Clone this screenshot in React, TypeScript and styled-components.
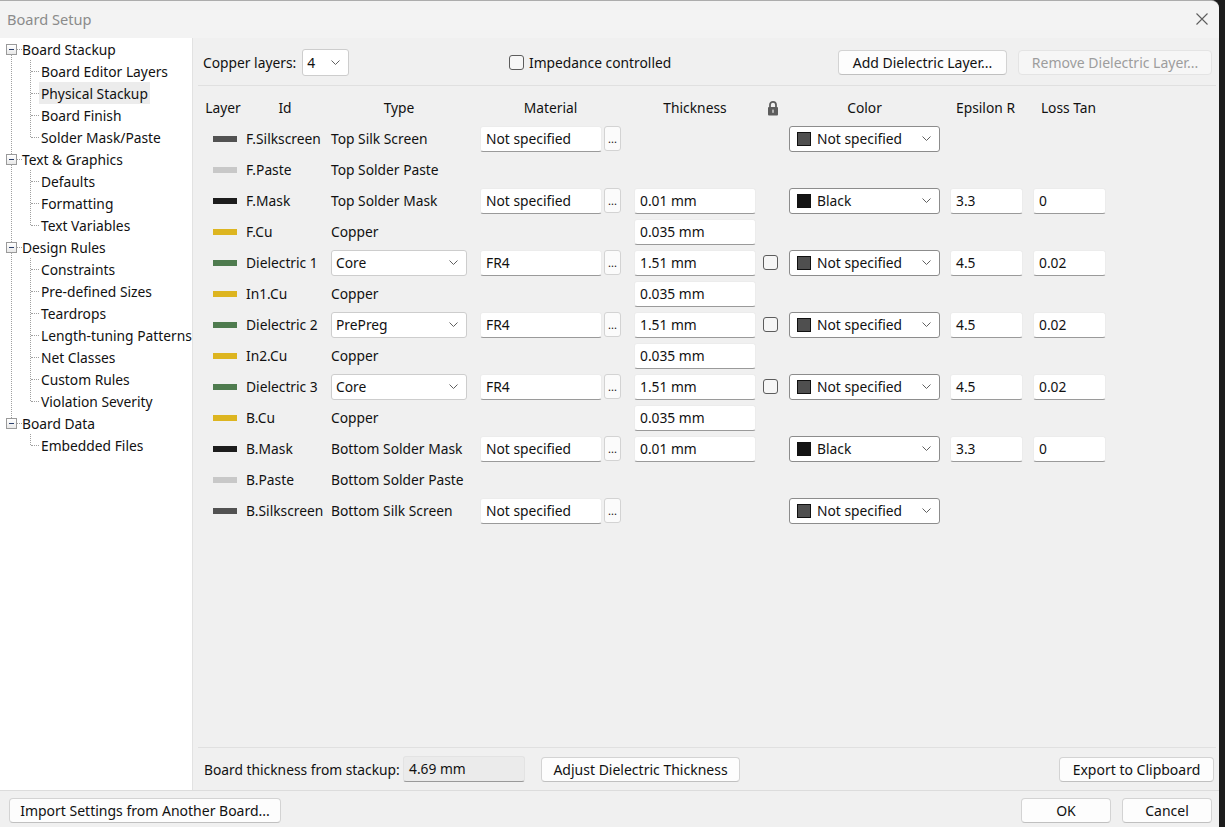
import React from "react";
import styled, { createGlobalStyle } from "styled-components";

const FONT = `"Noto Sans", "Liberation Sans", Arial, sans-serif`;

const Global = createGlobalStyle`
  html, body { margin: 0; padding: 0; background: #1c1c1c; }
  body { font-family: ${FONT}; font-size: 13.8px; color: #111; }
  * { box-sizing: border-box; }
  #root { width: 1225px; height: 827px; }
`;

const Window = styled.div`
  width: 1219px;
  height: 827px;
  background: #f0f0f0;
  border-top: 1px solid #acacac;
  border-top-right-radius: 8px;
  overflow: hidden;
  display: flex;
  flex-direction: column;
`;

const TitleBar = styled.div`
  height: 37px;
  flex: none;
  background: #f3f3f3;
  display: flex;
  align-items: center;
  justify-content: space-between;
  padding: 0 11px 1px 7px;
`;

const TitleText = styled.span`
  color: #8b8b8b;
  font-size: 14.6px;
`;

const Body = styled.div`
  height: 752px;
  flex: none;
  display: flex;
`;

/* ---------- tree ---------- */
const TreePanel = styled.div`
  width: 193px;
  flex: none;
  background: #fff;
  border-right: 1px solid #e2e2e2;
`;

const Group = styled.div`
  position: relative;
  &:not(:last-child)::before {
    content: "";
    position: absolute;
    left: 11px;
    top: 16px;
    bottom: -6px;
    border-left: 1px dotted #a0a0a0;
  }
`;

const ParentRow = styled.div`
  height: 22px;
  display: flex;
  align-items: center;
  padding-left: 6px;
`;

const Expander = styled.span`
  width: 11px;
  height: 11px;
  flex: none;
  border: 1px solid #9a9a9a;
  background: linear-gradient(#ffffff, #e9e9e9);
  display: flex;
  align-items: center;
  justify-content: center;
  &::after {
    content: "";
    width: 5px;
    height: 1px;
    background: #2b3f6b;
  }
`;

const HLine = styled.span<{ $w: number }>`
  width: ${(p) => p.$w}px;
  flex: none;
  border-top: 1px dotted #a0a0a0;
`;

const Children = styled.div`
  position: relative;
  &::before {
    content: "";
    position: absolute;
    left: 30px;
    top: 0;
    bottom: 11px;
    border-left: 1px dotted #a0a0a0;
  }
`;

const ChildRow = styled.div`
  height: 22px;
  display: flex;
  align-items: center;
  padding-left: 31px;
`;

const TreeLabel = styled.span<{ $sel?: boolean }>`
  height: 22px;
  display: flex;
  align-items: center;
  padding: 1px 2px 0;
  white-space: nowrap;
  color: #111;
  background: ${(p) => (p.$sel ? "#ececec" : "transparent")};
`;

const ParentLabel = styled.span`
  white-space: nowrap;
  color: #111;
`;

/* ---------- main panel ---------- */
const Main = styled.div`
  flex: 1;
  display: flex;
  flex-direction: column;
  padding: 10px 7px 0 10px;
  min-width: 0;
`;

const TopRow = styled.div`
  height: 27px;
  display: grid;
  grid-template-columns: 306px 1fr auto;
  align-items: center;
  padding-top: 1px;
`;

const Inline = styled.div<{ $gap: number }>`
  display: flex;
  align-items: center;
  gap: ${(p) => p.$gap}px;
`;

const Separator = styled.div<{ $mt: number }>`
  height: 1px;
  flex: none;
  background: #e0e0e0;
  margin: ${(p) => p.$mt}px -4px 0 -5px;
`;

const Select = styled.div<{ $w: number; $h?: number; $dark?: boolean }>`
  width: ${(p) => p.$w}px;
  height: ${(p) => p.$h ?? 26}px;
  flex: none;
  background: #fff;
  border: 1px solid ${(p) => (p.$dark ? "#8c8c8c" : "#cdcdcd")};
  border-radius: 3px;
  display: flex;
  align-items: center;
  padding: 0 8px 0 4px;
  gap: 6px;
  white-space: nowrap;
`;

const SelectText = styled.span`
  flex: 1;
`;

const CheckBox = styled.span`
  width: 15px;
  height: 15px;
  flex: none;
  border: 1px solid #5c5c5c;
  border-radius: 3px;
  background: #f6f6f6;
`;

const Button = styled.button<{ $w: number }>`
  width: ${(p) => p.$w}px;
  height: 25px;
  flex: none;
  background: #fdfdfd;
  border: 1px solid #d3d3d3;
  border-bottom-color: #c0c0c0;
  border-radius: 4px;
  font-family: ${FONT};
  font-size: 14px;
  color: #111;
  padding: 0;
  &:disabled {
    color: #9d9d9d;
    background: #f6f6f6;
    border-color: #e4e4e4;
  }
`;

const Table = styled.div`
  margin-top: 6px;
  display: flex;
  flex-direction: column;
`;

const TableRow = styled.div`
  height: 31px;
  display: grid;
  grid-template-columns: 40px 84px 144px 159px 130px 25px 159px 83px 83px;
  align-items: center;
`;

const HeadCell = styled.div`
  display: flex;
  justify-content: center;
  align-items: center;
  white-space: nowrap;
`;

const Cell = styled.div<{ $pl?: number }>`
  padding-left: ${(p) => p.$pl ?? 0}px;
  display: flex;
  align-items: center;
  gap: 2px;
  white-space: nowrap;
  min-width: 0;
`;

const Swatch = styled.span<{ $c: string }>`
  width: 24px;
  height: 6px;
  background: ${(p) => p.$c};
`;

const Field = styled.div<{ $w: number; $ro?: boolean }>`
  width: ${(p) => p.$w}px;
  height: 26px;
  flex: none;
  background: ${(p) => (p.$ro ? "#ebebeb" : "#fff")};
  border: 1px solid ${(p) => (p.$ro ? "#e3e3e3" : "#ececec")};
  border-bottom-color: #9a9a9a;
  border-radius: 3px;
  padding: 0 5px 1px;
  display: flex;
  align-items: center;
  white-space: nowrap;
`;

const DotsButton = styled.span`
  width: 17px;
  height: 25px;
  flex: none;
  background: #fbfbfb;
  border: 1px solid #d3d3d3;
  border-radius: 3px;
  display: flex;
  justify-content: center;
  align-items: flex-end;
  padding-bottom: 6px;
  font-size: 11px;
  line-height: 11px;
  letter-spacing: 0;
`;

const ColorChip = styled.span<{ $c: string }>`
  width: 14px;
  height: 14px;
  flex: none;
  margin-left: 3px;
  background: ${(p) => p.$c};
  border: 1px solid #111;
`;

const Spacer = styled.div`
  flex: 1;
`;

const BottomRow = styled.div`
  height: 26px;
  margin: 8px -2px 8px 0;
  display: flex;
  align-items: center;
`;

const BottomLabel = styled.span`
  width: 200px;
  flex: none;
  padding-left: 1px;
  white-space: nowrap;
`;

const AdjustWrap = styled.div`
  margin-left: 16px;
  display: flex;
`;

const Footer = styled.div`
  flex: 1;
  border-top: 1px solid #dcdcdc;
  display: flex;
  align-items: flex-start;
  padding: 7px 7px 0 9px;
  gap: 11px;
`;

/* ---------- icons ---------- */
const Chevron = () => (
  <svg width="9" height="5" viewBox="0 0 9 5">
    <polyline points="0.5,0.5 4.5,4.5 8.5,0.5" fill="none" stroke="#606060" strokeWidth="1" />
  </svg>
);

const CloseIcon = () => (
  <svg width="12" height="12" viewBox="0 0 12 12">
    <path d="M0.5 0.5 L11.5 11.5 M11.5 0.5 L0.5 11.5" stroke="#5e5e5e" strokeWidth="1.1" />
  </svg>
);

const LockIcon = () => (
  <svg width="12" height="16" viewBox="0 0 12 16">
    <path d="M3 7.5V4.8a3 3 0 0 1 6 0V7.5" fill="none" stroke="#5d5d5d" strokeWidth="1.8" />
    <rect x="1" y="7" width="10" height="8.5" rx="1" fill="#5d5d5d" />
    <rect x="5.3" y="9.6" width="1.4" height="3.2" fill="#d8d8d8" />
  </svg>
);

/* ---------- data ---------- */
const tree: { name: string; children: string[] }[] = [
  { name: "Board Stackup", children: ["Board Editor Layers", "Physical Stackup", "Board Finish", "Solder Mask/Paste"] },
  { name: "Text & Graphics", children: ["Defaults", "Formatting", "Text Variables"] },
  {
    name: "Design Rules",
    children: ["Constraints", "Pre-defined Sizes", "Teardrops", "Length-tuning Patterns", "Net Classes", "Custom Rules", "Violation Severity"],
  },
  { name: "Board Data", children: ["Embedded Files"] },
];

type Layer = {
  c: string;
  id: string;
  type: string;
  sel?: boolean;
  mat?: string;
  th?: string;
  lock?: boolean;
  color?: [string, string];
  eps?: string;
  loss?: string;
};

const SILK = "#525252";
const PASTE = "#c8c8c8";
const MASK = "#1c1c1c";
const CU = "#ddb520";
const DIE = "#4e7b4e";
const NS: [string, string] = ["#4f4f4f", "Not specified"];
const BLK: [string, string] = ["#141414", "Black"];

const layers: Layer[] = [
  { c: SILK, id: "F.Silkscreen", type: "Top Silk Screen", mat: "Not specified", color: NS },
  { c: PASTE, id: "F.Paste", type: "Top Solder Paste" },
  { c: MASK, id: "F.Mask", type: "Top Solder Mask", mat: "Not specified", th: "0.01 mm", color: BLK, eps: "3.3", loss: "0" },
  { c: CU, id: "F.Cu", type: "Copper", th: "0.035 mm" },
  { c: DIE, id: "Dielectric 1", type: "Core", sel: true, mat: "FR4", th: "1.51 mm", lock: true, color: NS, eps: "4.5", loss: "0.02" },
  { c: CU, id: "In1.Cu", type: "Copper", th: "0.035 mm" },
  { c: DIE, id: "Dielectric 2", type: "PrePreg", sel: true, mat: "FR4", th: "1.51 mm", lock: true, color: NS, eps: "4.5", loss: "0.02" },
  { c: CU, id: "In2.Cu", type: "Copper", th: "0.035 mm" },
  { c: DIE, id: "Dielectric 3", type: "Core", sel: true, mat: "FR4", th: "1.51 mm", lock: true, color: NS, eps: "4.5", loss: "0.02" },
  { c: CU, id: "B.Cu", type: "Copper", th: "0.035 mm" },
  { c: MASK, id: "B.Mask", type: "Bottom Solder Mask", mat: "Not specified", th: "0.01 mm", color: BLK, eps: "3.3", loss: "0" },
  { c: PASTE, id: "B.Paste", type: "Bottom Solder Paste" },
  { c: SILK, id: "B.Silkscreen", type: "Bottom Silk Screen", mat: "Not specified", color: NS },
];

export default function App() {
  return (
    <>
      <Global />
      <Window>
        <TitleBar>
          <TitleText>Board Setup</TitleText>
          <CloseIcon />
        </TitleBar>
        <Body>
          <TreePanel>
            {tree.map((g) => (
              <Group key={g.name}>
                <ParentRow>
                  <Expander />
                  <HLine $w={5} />
                  <ParentLabel>{g.name}</ParentLabel>
                </ParentRow>
                <Children>
                  {g.children.map((c) => (
                    <ChildRow key={c}>
                      <HLine $w={8} />
                      <TreeLabel $sel={c === "Physical Stackup"}>{c}</TreeLabel>
                    </ChildRow>
                  ))}
                </Children>
              </Group>
            ))}
          </TreePanel>
          <Main>
            <TopRow>
              <Inline $gap={6}>
                <span>Copper layers:</span>
                <Select $w={47} $h={27}>
                  <SelectText>4</SelectText>
                  <Chevron />
                </Select>
              </Inline>
              <Inline $gap={5}>
                <CheckBox />
                <span>Impedance controlled</span>
              </Inline>
              <Inline $gap={11}>
                <Button $w={169}>Add Dielectric Layer...</Button>
                <Button $w={194} disabled>
                  Remove Dielectric Layer...
                </Button>
              </Inline>
            </TopRow>
            <Separator $mt={10} />
            <Table>
              <TableRow>
                <HeadCell>Layer</HeadCell>
                <HeadCell>Id</HeadCell>
                <HeadCell>Type</HeadCell>
                <HeadCell>Material</HeadCell>
                <HeadCell>Thickness</HeadCell>
                <HeadCell>
                  <LockIcon />
                </HeadCell>
                <HeadCell>Color</HeadCell>
                <HeadCell>Epsilon R</HeadCell>
                <HeadCell>Loss Tan</HeadCell>
              </TableRow>
              {layers.map((l) => (
                <TableRow key={l.id}>
                  <Cell $pl={10}>
                    <Swatch $c={l.c} />
                  </Cell>
                  <Cell $pl={3}>{l.id}</Cell>
                  <Cell $pl={4}>
                    {l.sel ? (
                      <Select $w={136}>
                        <SelectText>{l.type}</SelectText>
                        <Chevron />
                      </Select>
                    ) : (
                      l.type
                    )}
                  </Cell>
                  <Cell $pl={9}>
                    {l.mat && (
                      <>
                        <Field $w={122}>{l.mat}</Field>
                        <DotsButton>...</DotsButton>
                      </>
                    )}
                  </Cell>
                  <Cell $pl={4}>{l.th && <Field $w={122}>{l.th}</Field>}</Cell>
                  <Cell $pl={3}>{l.lock && <CheckBox />}</Cell>
                  <Cell $pl={4}>
                    {l.color && (
                      <Select $w={151} $dark>
                        <ColorChip $c={l.color[0]} />
                        <SelectText>{l.color[1]}</SelectText>
                        <Chevron />
                      </Select>
                    )}
                  </Cell>
                  <Cell $pl={6}>{l.eps && <Field $w={73}>{l.eps}</Field>}</Cell>
                  <Cell $pl={6}>{l.loss && <Field $w={73}>{l.loss}</Field>}</Cell>
                </TableRow>
              ))}
            </Table>
            <Spacer />
            <Separator $mt={0} />
            <BottomRow>
              <BottomLabel>Board thickness from stackup:</BottomLabel>
              <Field $w={122} $ro>
                4.69 mm
              </Field>
              <AdjustWrap>
                <Button $w={199}>Adjust Dielectric Thickness</Button>
              </AdjustWrap>
              <Spacer />
              <Button $w={155}>Export to Clipboard</Button>
            </BottomRow>
          </Main>
        </Body>
        <Footer>
          <Button $w={272}>Import Settings from Another Board...</Button>
          <Spacer />
          <Button $w={90}>OK</Button>
          <Button $w={90}>Cancel</Button>
        </Footer>
      </Window>
    </>
  );
}
